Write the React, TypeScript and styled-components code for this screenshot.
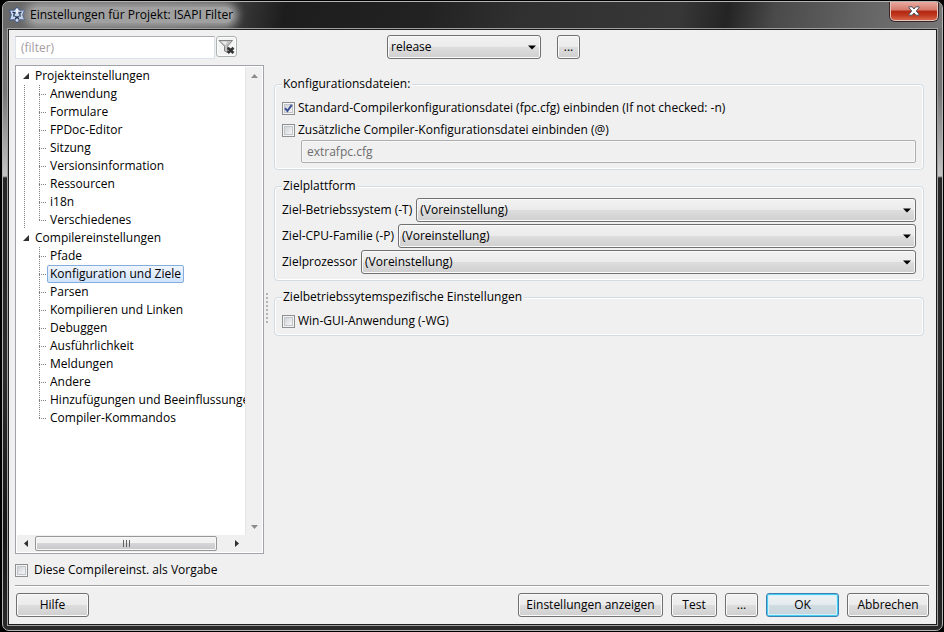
import React from "react";
import styled, { createGlobalStyle, css } from "styled-components";

const GlobalStyle = createGlobalStyle`
  *, *::before, *::after { box-sizing: border-box; }
  body { margin: 0; background: #000; }
  body, button, input, select {
    font-family: "Open Sans", "Noto Sans", sans-serif;
    font-size: 12px;
    line-height: 16px;
    color: #000;
  }
  ul { list-style: none; margin: 0; padding: 0; }
`;

const Page = styled.div`
  display: flex;
  min-height: 100vh;
  padding: 1px 1px 1px 2px;
`;

const WindowFrame = styled.main`
  flex: 1;
  min-width: 0;
  display: flex;
  flex-direction: column;
  border: 1px solid #b4b4b4;
  border-radius: 7px;
  overflow: hidden;
  background: linear-gradient(#6e6e6e 28px, #777 90px, #c4c4c4 174px, #262626 176px, #2c2c2c 60%, #151515 85%, #2a2a2a);
`;

const TitleBar = styled.header`
  display: flex;
  align-items: flex-start;
  height: 26px;
  padding: 0 4px 0 5px;
  background:
    linear-gradient(100deg, #6a6a6a, #585858 18%, #3a3a3a 25%, #1d1d1d 30%, #222 45%, #303030 55%, #373737 72%, #242424 77%, #4a4a4a 82%, #666 92%, #777);
`;

const AppIcon = styled.svg`
  width: 18px;
  height: 18px;
  margin-top: 4px;
`;

const Title = styled.h1`
  margin: 5px auto 0 4px;
  border-radius: 8px;
  background: #a0a0a0;
  box-shadow: 0 0 8px 5px #a0a0a0;
  font-size: 12px;
  font-weight: 400;
  line-height: 16px;
`;

const CloseButton = styled.button`
  display: grid;
  place-items: center;
  width: 48px;
  height: 19px;
  padding: 0;
  border: 1px solid #e4c5c0;
  border-top: 0;
  border-radius: 0 0 5px 5px;
  box-shadow: 0 0 0 1px #3a2422;
  background: linear-gradient(#e9a9a0, #d4796c 45%, #b4260f 50%, #c03a20 75%, #d8644a);
`;

const Client = styled.div`
  flex: 1;
  display: flex;
  flex-direction: column;
  margin: 1px 5px 5px;
  padding: 5px 7px 7px 6px;
  border: 1px solid #1c1c1c;
  outline: 1px solid #a0a0a0;
  background: #f0f0f0;
`;

const Columns = styled.div`
  flex: 1;
  display: flex;
`;

const Sidebar = styled.section`
  flex: 0 0 249px;
  display: flex;
  flex-direction: column;
  gap: 6px;
  min-width: 0;
`;

const FilterRow = styled.div`
  display: flex;
  gap: 1px;
  padding-top: 1px;
  height: 24px;
`;

const FilterInput = styled.input`
  width: 200px;
  height: 23px;
  padding: 0 5px;
  border: 1px solid #dbe2ee;
  border-top-color: #abadb3;
  background: #fff;
  &::placeholder { color: #a39da0; opacity: 1; }
`;

const FilterButton = styled.button`
  display: grid;
  place-items: center;
  width: 21px;
  height: 21px;
  padding: 0;
  border: 1px solid #adb2b5;
  border-radius: 3px;
  background: #f4f4f4;
  box-shadow: inset 0 0 0 1px #fcfcfc;
`;

const TreeBox = styled.div`
  flex: 1;
  display: grid;
  grid-template-columns: minmax(0, 1fr) 17px;
  grid-template-rows: minmax(0, 1fr) 17px;
  padding: 1px;
  border: 1px solid #a0a3a8;
  background: #fff;
`;

const TreeView = styled.ul`
  overflow: hidden;
  white-space: nowrap;
`;

const RootRow = styled.div`
  display: flex;
  align-items: center;
  gap: 6px;
  height: 18px;
  padding-left: 6px;
`;

const dots = (angle: string) => `repeating-linear-gradient(${angle}, #808080 0 1px, transparent 1px 2px)`;

const Branch = styled.ul<{ $continues: boolean }>`
  padding-left: 22px;
  ${(p) => p.$continues && css`
    background: ${dots("180deg")} 7px 0 / 1px 100% no-repeat;
  `}
`;

const LeafRow = styled.li`
  display: flex;
  align-items: center;
  height: 18px;
  &::before {
    content: "";
    flex: 0 0 8px;
    height: 18px;
    background:
      ${dots("180deg")} 0 0 / 1px 18px no-repeat,
      ${dots("90deg")} 0 9px / 7px 1px no-repeat;
  }
  &:last-child::before {
    background:
      ${dots("180deg")} 0 0 / 1px 9px no-repeat,
      ${dots("90deg")} 0 9px / 7px 1px no-repeat;
  }
`;

const LeafLabel = styled.span<{ $selected: boolean }>`
  height: 18px;
  padding: 0 2px;
  border: 1px solid transparent;
  border-radius: 2px;
  line-height: 16px;
  ${(p) => p.$selected && css`
    border-color: #84acdd;
    background: linear-gradient(#f0f6fe, #cfe3fc);
  `}
`;

const VerticalScroll = styled.div`
  display: flex;
  flex-direction: column;
  justify-content: space-between;
  border-left: 1px solid #e6e6e6;
  background: #f0f0f0;
`;

const HorizontalScroll = styled.div`
  display: flex;
  background: #f0f0f0;
`;

const ScrollArrow = styled.button`
  display: grid;
  place-items: center;
  flex: 0 0 18px;
  min-width: 16px;
  padding: 0;
  border: 0;
  background: transparent;
`;

const ScrollTrack = styled.div`
  flex: 1;
  display: flex;
`;

const ScrollThumb = styled.div`
  flex: 0 0 95%;
  display: grid;
  place-items: center;
  height: 15px;
  margin-top: 1px;
  border: 1px solid #979797;
  border-radius: 2px;
  box-shadow: inset 0 0 0 1px #f8f8f8;
  background: linear-gradient(#f2f2f2 50%, #d6d6d8 50%, #c6c6ca);
`;

const Corner = styled.div`
  background: #f0f0f0;
`;

const Splitter = styled.div`
  flex: 0 0 10px;
  display: grid;
  align-items: center;
  padding: 26px 0 0 2px;
`;

const Content = styled.section`
  flex: 1;
  min-width: 0;
  padding-right: 5px;
`;

const ModeRow = styled.div`
  display: flex;
  gap: 16px;
  padding-left: 113px;
  margin-bottom: 17px;
`;

const Group = styled.fieldset`
  display: flex;
  flex-direction: column;
  min-width: 0;
  margin: 0 0 8px;
  padding: 8px 7px 6px;
  border: 1px solid #d0dbe3;
  border-radius: 4px;
  box-shadow: inset 0 0 0 1px #fff;
`;

const Legend = styled.legend`
  padding: 0 2px 0 1px;
  background: #f0f0f0;
`;

const CheckLabel = styled.label<{ $gap: number }>`
  display: flex;
  align-items: center;
  gap: ${(p) => p.$gap}px;
  height: 16px;
`;

const CheckWrap = styled.span`
  display: grid;
  > * { grid-area: 1 / 1; }
  svg { place-self: center; pointer-events: none; visibility: hidden; }
  input:checked + svg { visibility: visible; }
`;

const CheckInput = styled.input`
  appearance: none;
  width: 13px;
  height: 13px;
  margin: 0;
  border: 1px solid #8e8f8f;
  background: linear-gradient(135deg, #c6cad0, #f4f4f5 80%);
  box-shadow: inset 0 0 0 1px #f4f4f4, inset 0 0 0 2px #c2c5ca;
`;

const Checks = styled.div`
  display: flex;
  flex-direction: column;
  gap: 6px;
`;

const ConfigInput = styled.input`
  height: 23px;
  margin: 2px 0 0 19px;
  padding: 0 5px;
  border: 1px solid #aeaeae;
  border-radius: 2px;
  background: #f0f0f0;
  box-shadow: inset 0 0 0 1px #f8f8f8;
  color: #6d6d6d;
`;

const PlatformRows = styled.div`
  display: flex;
  flex-direction: column;
  gap: 2px;
  margin-top: -4px;
`;

const PlatformRow = styled.div`
  display: flex;
  align-items: center;
  gap: 4px;
`;

const raised = css`
  border: 1px solid #707070;
  border-radius: 3px;
  background: linear-gradient(#f2f2f2, #ebebeb 48%, #dddddd 52%, #cfcfcf);
  box-shadow: inset 0 0 0 1px #fafafa;
`;

const SelectWrap = styled.span<{ $fixed?: boolean }>`
  display: grid;
  ${(p) => (p.$fixed ? "flex: 0 0 154px;" : "flex: 1;")}
  > * { grid-area: 1 / 1; }
  svg { place-self: center end; margin-right: 5px; pointer-events: none; }
`;

const SelectControl = styled.select`
  ${raised}
  appearance: none;
  width: 100%;
  height: 24px;
  padding: 0 20px 0 3px;
`;

const Button = styled.button<{ $width: number; $primary?: boolean }>`
  ${raised}
  width: ${(p) => p.$width}px;
  height: 24px;
  padding: 0;
  white-space: nowrap;
  ${(p) => p.$primary && css`
    border-color: #3c7fb1;
    background: linear-gradient(#eef2f4, #e4ebee 48%, #d0dce2 52%, #c6d3da);
    box-shadow: inset 0 0 0 1px #48cdf2, inset 0 0 0 2px #d4f0f8;
  `}
`;

const DefaultRow = styled.div`
  padding: 8px 0 7px;
`;

const Footer = styled.footer`
  display: flex;
  gap: 8px;
  padding: 7px 0 0 1px;
  border-top: 1px solid #a0a0a0;
  box-shadow: inset 0 1px 0 #fff;
`;

const Spacer = styled.div`
  flex: 1;
`;

function Check({ label, checked = false, gap = 3 }: { label: string; checked?: boolean; gap?: number }) {
  return (
    <CheckLabel $gap={gap}>
      <CheckWrap>
        <CheckInput type="checkbox" defaultChecked={checked} />
        <svg width="9" height="9" viewBox="0 0 9 9" fill="none" stroke="#3b4f94" strokeWidth="2">
          <path d="M1 4.2 3.4 7 7.8 .8" />
        </svg>
      </CheckWrap>
      {label}
    </CheckLabel>
  );
}

function Select({ id, options, label, fixed }: { id: string; options: string[]; label?: string; fixed?: boolean }) {
  return (
    <SelectWrap $fixed={fixed}>
      <SelectControl id={id} aria-label={label}>
        {options.map((o) => <option key={o}>{o}</option>)}
      </SelectControl>
      <svg width="8" height="5" viewBox="0 0 8 5"><path d="M0 .5h8L4 4.5z" /></svg>
    </SelectWrap>
  );
}

type Direction = "up" | "down" | "left" | "right";
const arrowPaths: Record<Direction, string> = {
  up: "M4.5 2 8 6H1z",
  down: "M4.5 7 8 3H1z",
  left: "M2 4.5 6 1v7z",
  right: "M7 4.5 3 1v7z",
};

function Arrow({ to, color, label }: { to: Direction; color: string; label: string }) {
  return (
    <ScrollArrow type="button" aria-label={label}>
      <svg width="9" height="9" viewBox="0 0 9 9" fill={color}><path d={arrowPaths[to]} /></svg>
    </ScrollArrow>
  );
}

const sections = [
  {
    name: "Projekteinstellungen",
    items: ["Anwendung", "Formulare", "FPDoc-Editor", "Sitzung", "Versionsinformation", "Ressourcen", "i18n", "Verschiedenes"],
  },
  {
    name: "Compilereinstellungen",
    items: [
      "Pfade", "Konfiguration und Ziele", "Parsen", "Kompilieren und Linken", "Debuggen", "Ausführlichkeit",
      "Meldungen", "Andere", "Hinzufügungen und Beeinflussungen", "Compiler-Kommandos",
    ],
  },
];

const platforms = [
  { id: "os", label: "Ziel-Betriebssystem (-T)" },
  { id: "cpu", label: "Ziel-CPU-Familie (-P)" },
  { id: "processor", label: "Zielprozessor" },
];

export default function App() {
  const [selected, setSelected] = React.useState("Konfiguration und Ziele");
  return (
    <Page>
      <GlobalStyle />
      <WindowFrame>
        <TitleBar>
          <AppIcon viewBox="0 0 18 18">
            <path d="M9 1 11.6 4.2 16.5 4 14.8 9l1.7 5-4.9-.3L9 17l-2.6-3.3-4.9.3L3.2 9 1.5 4l4.9.2z" fill="#c9daf2" stroke="#3f5687" strokeWidth="1" strokeLinejoin="round" />
            <path d="M4.5 6.2 7.7 7.2M13.5 6.2l-3.2 1M6 7.5v3.2M12 7.5v3.2M7.4 10.2 9 11.8l1.6-1.6M7 13.3l1-1.3M11 13.3l-1-1.3" fill="none" stroke="#1d2c4e" strokeWidth="1.3" />
            <path d="M9 3v4.5" stroke="#fff" strokeWidth="1.4" />
          </AppIcon>
          <Title>Einstellungen für Projekt: ISAPI Filter</Title>
          <CloseButton type="button" aria-label="Schließen">
            <svg width="12" height="10" viewBox="0 0 12 10">
              <path d="M1 .8h3.2L6 3 7.8.8H11v1L8.3 5 11 8.2v1H7.8L6 7 4.2 9.2H1v-1L3.7 5 1 1.8z" fill="#fff" stroke="#54505c" strokeWidth="1" />
            </svg>
          </CloseButton>
        </TitleBar>
        <Client>
          <Columns>
            <Sidebar>
              <FilterRow>
                <FilterInput type="text" placeholder="(filter)" aria-label="Filter" />
                <FilterButton type="button" aria-label="Filter löschen">
                  <svg width="17" height="17" viewBox="0 0 17 17">
                    <path d="M1 2.5h13.5L9.5 8.2v6.3L6.5 13V8.2z" fill="#c4c4c4" stroke="#828282" />
                    <path d="M3 3.5h6L7.5 7z" fill="#eee" />
                    <path d="M9.8 9.8 15.500 15M15.5 9.8 9.8 15" stroke="#333" strokeWidth="2.6" />
                  </svg>
                </FilterButton>
              </FilterRow>
              <TreeBox>
                <TreeView role="tree">
                  {sections.map((section, i) => (
                    <li key={section.name} role="treeitem" aria-expanded="true">
                      <RootRow>
                        <svg width="6" height="6" viewBox="0 0 6 6"><path d="M6 0v6H0z" fill="#303030" /></svg>
                        {section.name}
                      </RootRow>
                      <Branch role="group" $continues={i < sections.length - 1}>
                        {section.items.map((item) => (
                          <LeafRow key={item} role="treeitem" aria-selected={item === selected} onClick={() => setSelected(item)}>
                            <LeafLabel $selected={item === selected}>{item}</LeafLabel>
                          </LeafRow>
                        ))}
                      </Branch>
                    </li>
                  ))}
                </TreeView>
                <VerticalScroll>
                  <Arrow to="up" color="#8c8c8c" label="Nach oben" />
                  <Arrow to="down" color="#8c8c8c" label="Nach unten" />
                </VerticalScroll>
                <HorizontalScroll>
                  <Arrow to="left" color="#303030" label="Nach links" />
                  <ScrollTrack>
                    <ScrollThumb>
                      <svg width="9" height="7" viewBox="0 0 9 7" stroke="#606060"><path d="M1.500 0v7M4.500 0v7M7.500 0v7" /></svg>
                    </ScrollThumb>
                  </ScrollTrack>
                  <Arrow to="right" color="#303030" label="Nach rechts" />
                </HorizontalScroll>
                <Corner />
              </TreeBox>
            </Sidebar>
            <Splitter>
              <svg width="3" height="30" viewBox="0 0 3 30" fill="#b4b4b4">
                {[0, 4, 8, 12, 16, 20, 24, 28].map((y) => <rect key={y} x="0" y={y} width="2" height="2" />)}
              </svg>
            </Splitter>
            <Content>
              <ModeRow>
                <Select id="mode" label="Erstellmodus" options={["release", "debug"]} fixed />
                <Button type="button" $width={23}>...</Button>
              </ModeRow>
              <Group>
                <Legend>Konfigurationsdateien:</Legend>
                <Checks>
                  <Check checked label="Standard-Compilerkonfigurationsdatei (fpc.cfg) einbinden (If not checked: -n)" />
                  <Check label="Zusätzliche Compiler-Konfigurationsdatei einbinden (@)" />
                </Checks>
                <ConfigInput type="text" defaultValue="extrafpc.cfg" disabled aria-label="Zusätzliche Konfigurationsdatei" />
              </Group>
              <Group>
                <Legend>Zielplattform</Legend>
                <PlatformRows>
                  {platforms.map((p) => (
                    <PlatformRow key={p.id}>
                      <label htmlFor={p.id}>{p.label}</label>
                      <Select id={p.id} options={["(Voreinstellung)"]} />
                    </PlatformRow>
                  ))}
                </PlatformRows>
              </Group>
              <Group>
                <Legend>Zielbetriebssytemspezifische Einstellungen</Legend>
                <Check label="Win-GUI-Anwendung (-WG)" />
              </Group>
            </Content>
          </Columns>
          <DefaultRow>
            <Check label="Diese Compilereinst. als Vorgabe" gap={6} />
          </DefaultRow>
          <Footer>
            <Button type="button" $width={73}>Hilfe</Button>
            <Spacer />
            <Button type="button" $width={145}>Einstellungen anzeigen</Button>
            <Button type="button" $width={46}>Test</Button>
            <Button type="button" $width={33}>...</Button>
            <Button type="button" $width={73} $primary>OK</Button>
            <Button type="button" $width={82}>Abbrechen</Button>
          </Footer>
        </Client>
      </WindowFrame>
    </Page>
  );
}
